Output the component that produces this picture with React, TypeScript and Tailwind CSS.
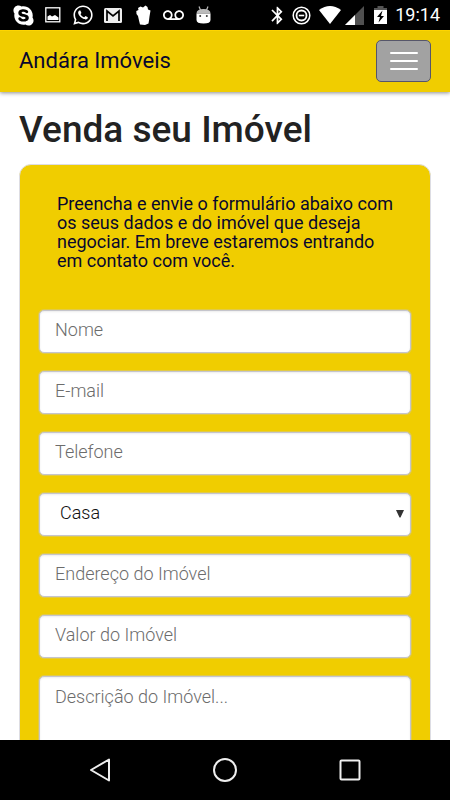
import type { ReactNode } from "react";
import { FaSkype, FaWhatsapp } from "react-icons/fa";
import { MdBluetooth, MdVoicemail } from "react-icons/md";

function Slot({ children }: { children: ReactNode }) {
  return <span className="flex w-[30px] items-center justify-center">{children}</span>;
}

function StatusBar() {
  return (
    <div className="flex h-[30px] shrink-0 items-center justify-between bg-black pr-[10px] pl-2 text-white">
      <div className="flex items-center">
        <Slot>
          <FaSkype size={23} />
        </Slot>
        <Slot>
          <svg width="16" height="16" viewBox="0 0 16 16">
            <rect x="0.8" y="0.8" width="14" height="14" fill="none" stroke="currentColor" strokeWidth="1.3" />
            <path d="M2.500 13V9.500L5 8l2 1.500 3-1.500 3.500 2.500V13z" fill="currentColor" />
          </svg>
        </Slot>
        <Slot>
          <FaWhatsapp size={22} />
        </Slot>
        <Slot>
          <svg width="18" height="15" viewBox="0 0 18 15">
            <rect width="18" height="15" rx="1.500" fill="#eee" />
            <path d="M3 13V3L9 8l6-5v10" fill="none" stroke="#000" strokeWidth="1.700" />
          </svg>
        </Slot>
        <Slot>
          <svg width="15" height="20" viewBox="0 0 15 20">
            <path
              d="M2.500 5 2 3l2.500-1.500L7 2.500 9.500.5l2 1.500.5 2.500 2.500 1-.5 3-.5 3-.5 4-.5 3-3.500 1.500-5-.5-1-4L2 11 .500 9 .300 6z"
              fill="currentColor"
            />
          </svg>
        </Slot>
        <Slot>
          <MdVoicemail size={21} />
        </Slot>
        <Slot>
          <svg width="15" height="18" viewBox="0 0 15 18">
            <path d="M3 .5 4.500 4M12 .5 10.500 4" stroke="#bbb" strokeWidth="1.200" />
            <path d="M.5 7.500Q.5 3 7.500 3t7 4.500z" fill="#bbb" />
            <path d="M.5 7.500h14V14q0 3.500-7 3.500T.5 14z" fill="#fff" />
            <circle cx="4.200" cy="10" r="1" fill="#333" />
            <circle cx="10.800" cy="10" r="1" fill="#333" />
          </svg>
        </Slot>
      </div>
      <div className="flex items-center gap-2">
        <MdBluetooth size={21} className="-mr-1" />
        <svg width="19" height="19" viewBox="0 0 19 19" fill="none" stroke="currentColor">
          <circle cx="9.500" cy="9.500" r="8.300" strokeWidth="1.500" />
          <circle cx="9.500" cy="9.500" r="5" strokeWidth="1.800" />
          <path d="M6.800 9.500h5.400" strokeWidth="1.600" />
        </svg>
        <svg width="22" height="18" viewBox="0 0 22 18">
          <path d="M0 4Q11-4 22 4L11 18z" fill="currentColor" />
        </svg>
        <svg width="19" height="19" viewBox="0 0 19 19" className="-ml-1">
          <path d="M19 0v19H0z" fill="#505050" />
          <path d="M10 9v10H0z" fill="#fff" />
        </svg>
        <svg width="13" height="18" viewBox="0 0 13 18" className="ml-[2px]">
          <path d="M3.500 0h6v2H13v3H0V2h3.500z" fill="#555" />
          <path d="M0 4h13v14H0z" fill="#fff" />
          <path d="M8.500 4.500 3 11h3l-1.500 5.500L10 10H7z" fill="#000" />
        </svg>
        <time className="text-lg">19:14</time>
      </div>
    </div>
  );
}

const fieldBox =
  "block w-full rounded-[5px] border border-[#c5c5cc] bg-white text-[18px] font-light shadow-[inset_0_1px_2px_rgba(0,0,0,0.08),0_0_0_1px_rgba(197,197,204,0.35)] outline-none";

function Field({ label, type = "text" }: { label: string; type?: string }) {
  return (
    <input
      type={type}
      aria-label={label}
      placeholder={label}
      className={`${fieldBox} h-[43px] px-[15px] pb-1 placeholder:text-[#6c6c6c]`}
    />
  );
}

export default function App() {
  return (
    <div className="flex h-screen flex-col overflow-hidden bg-white font-[Roboto,sans-serif]">
      <StatusBar />
      <header className="z-10 flex h-[62px] shrink-0 items-center justify-between border-t border-[#ffd500] bg-[#f0cd00] px-[19px] pb-[2px] shadow-[0_1px_4px_rgba(0,0,0,0.45)]">
        <a href="#inicio" className="text-[22px] text-[#08082e]">
          Andára Imóveis
        </a>
        <button
          type="button"
          aria-label="Menu"
          className="flex h-[42px] w-[55px] flex-col items-center justify-center gap-[6px] rounded-[5px] border border-[#56566a] bg-[#a2a2a2]"
        >
          <span className="h-[2px] w-7 rounded-[1px] bg-white" />
          <span className="h-[2px] w-7 rounded-[1px] bg-white" />
          <span className="h-[2px] w-7 rounded-[1px] bg-white" />
        </button>
      </header>
      <main className="min-h-0 flex-1 overflow-hidden px-[19px] pt-[15px]">
        <h1 className="text-[37px] leading-[46px] font-medium text-[#222]">Venda seu Imóvel</h1>
        <form className="mt-[11px] rounded-xl border border-[#dddde3] bg-[#f0cd00] px-[19px] pt-[29px] pb-5">
          <p className="mb-10 px-[18px] text-[18px] leading-[19px] text-[#08082e]">
            Preencha e envie o formulário abaixo com os seus dados e do imóvel que deseja negociar. Em breve estaremos
            entrando em contato com você.
          </p>
          <div className="flex flex-col gap-[18px]">
            <Field label="Nome" />
            <Field label="E-mail" type="email" />
            <Field label="Telefone" type="tel" />
            <div className="relative">
              <select
                aria-label="Tipo de imóvel"
                className={`${fieldBox} h-[43px] appearance-none px-5 pb-1 text-[#111]`}
              >
                <option>Casa</option>
              </select>
              <svg
                width="8"
                height="8"
                viewBox="0 0 8 8"
                className="pointer-events-none absolute top-[17px] right-[7px]"
              >
                <path d="M0 0h8L4.500 7.500h-1z" fill="#333" />
              </svg>
            </div>
            <Field label="Endereço do Imóvel" />
            <Field label="Valor do Imóvel" />
            <textarea
              aria-label="Descrição do Imóvel"
              placeholder="Descrição do Imóvel..."
              rows={5}
              className={`${fieldBox} resize-none px-[15px] py-[6px] placeholder:text-[#6c6c6c]`}
            />
          </div>
        </form>
      </main>
      <nav className="flex h-[60px] shrink-0 items-center justify-center gap-[101px] bg-black text-[#eee]">
        <button type="button" aria-label="Voltar">
          <svg width="24" height="24" viewBox="0 0 24 24" fill="none" stroke="currentColor" strokeWidth="2">
            <path d="M21 1.500v21L3 12z" strokeLinejoin="round" />
          </svg>
        </button>
        <button type="button" aria-label="Início">
          <svg width="24" height="24" viewBox="0 0 24 24" fill="none" stroke="currentColor" strokeWidth="2">
            <circle cx="12" cy="12" r="11" />
          </svg>
        </button>
        <button type="button" aria-label="Recentes">
          <svg width="24" height="24" viewBox="0 0 24 24" fill="none" stroke="currentColor" strokeWidth="2">
            <rect x="2.500" y="2.500" width="19" height="19" rx="1" />
          </svg>
        </button>
      </nav>
    </div>
  );
}
